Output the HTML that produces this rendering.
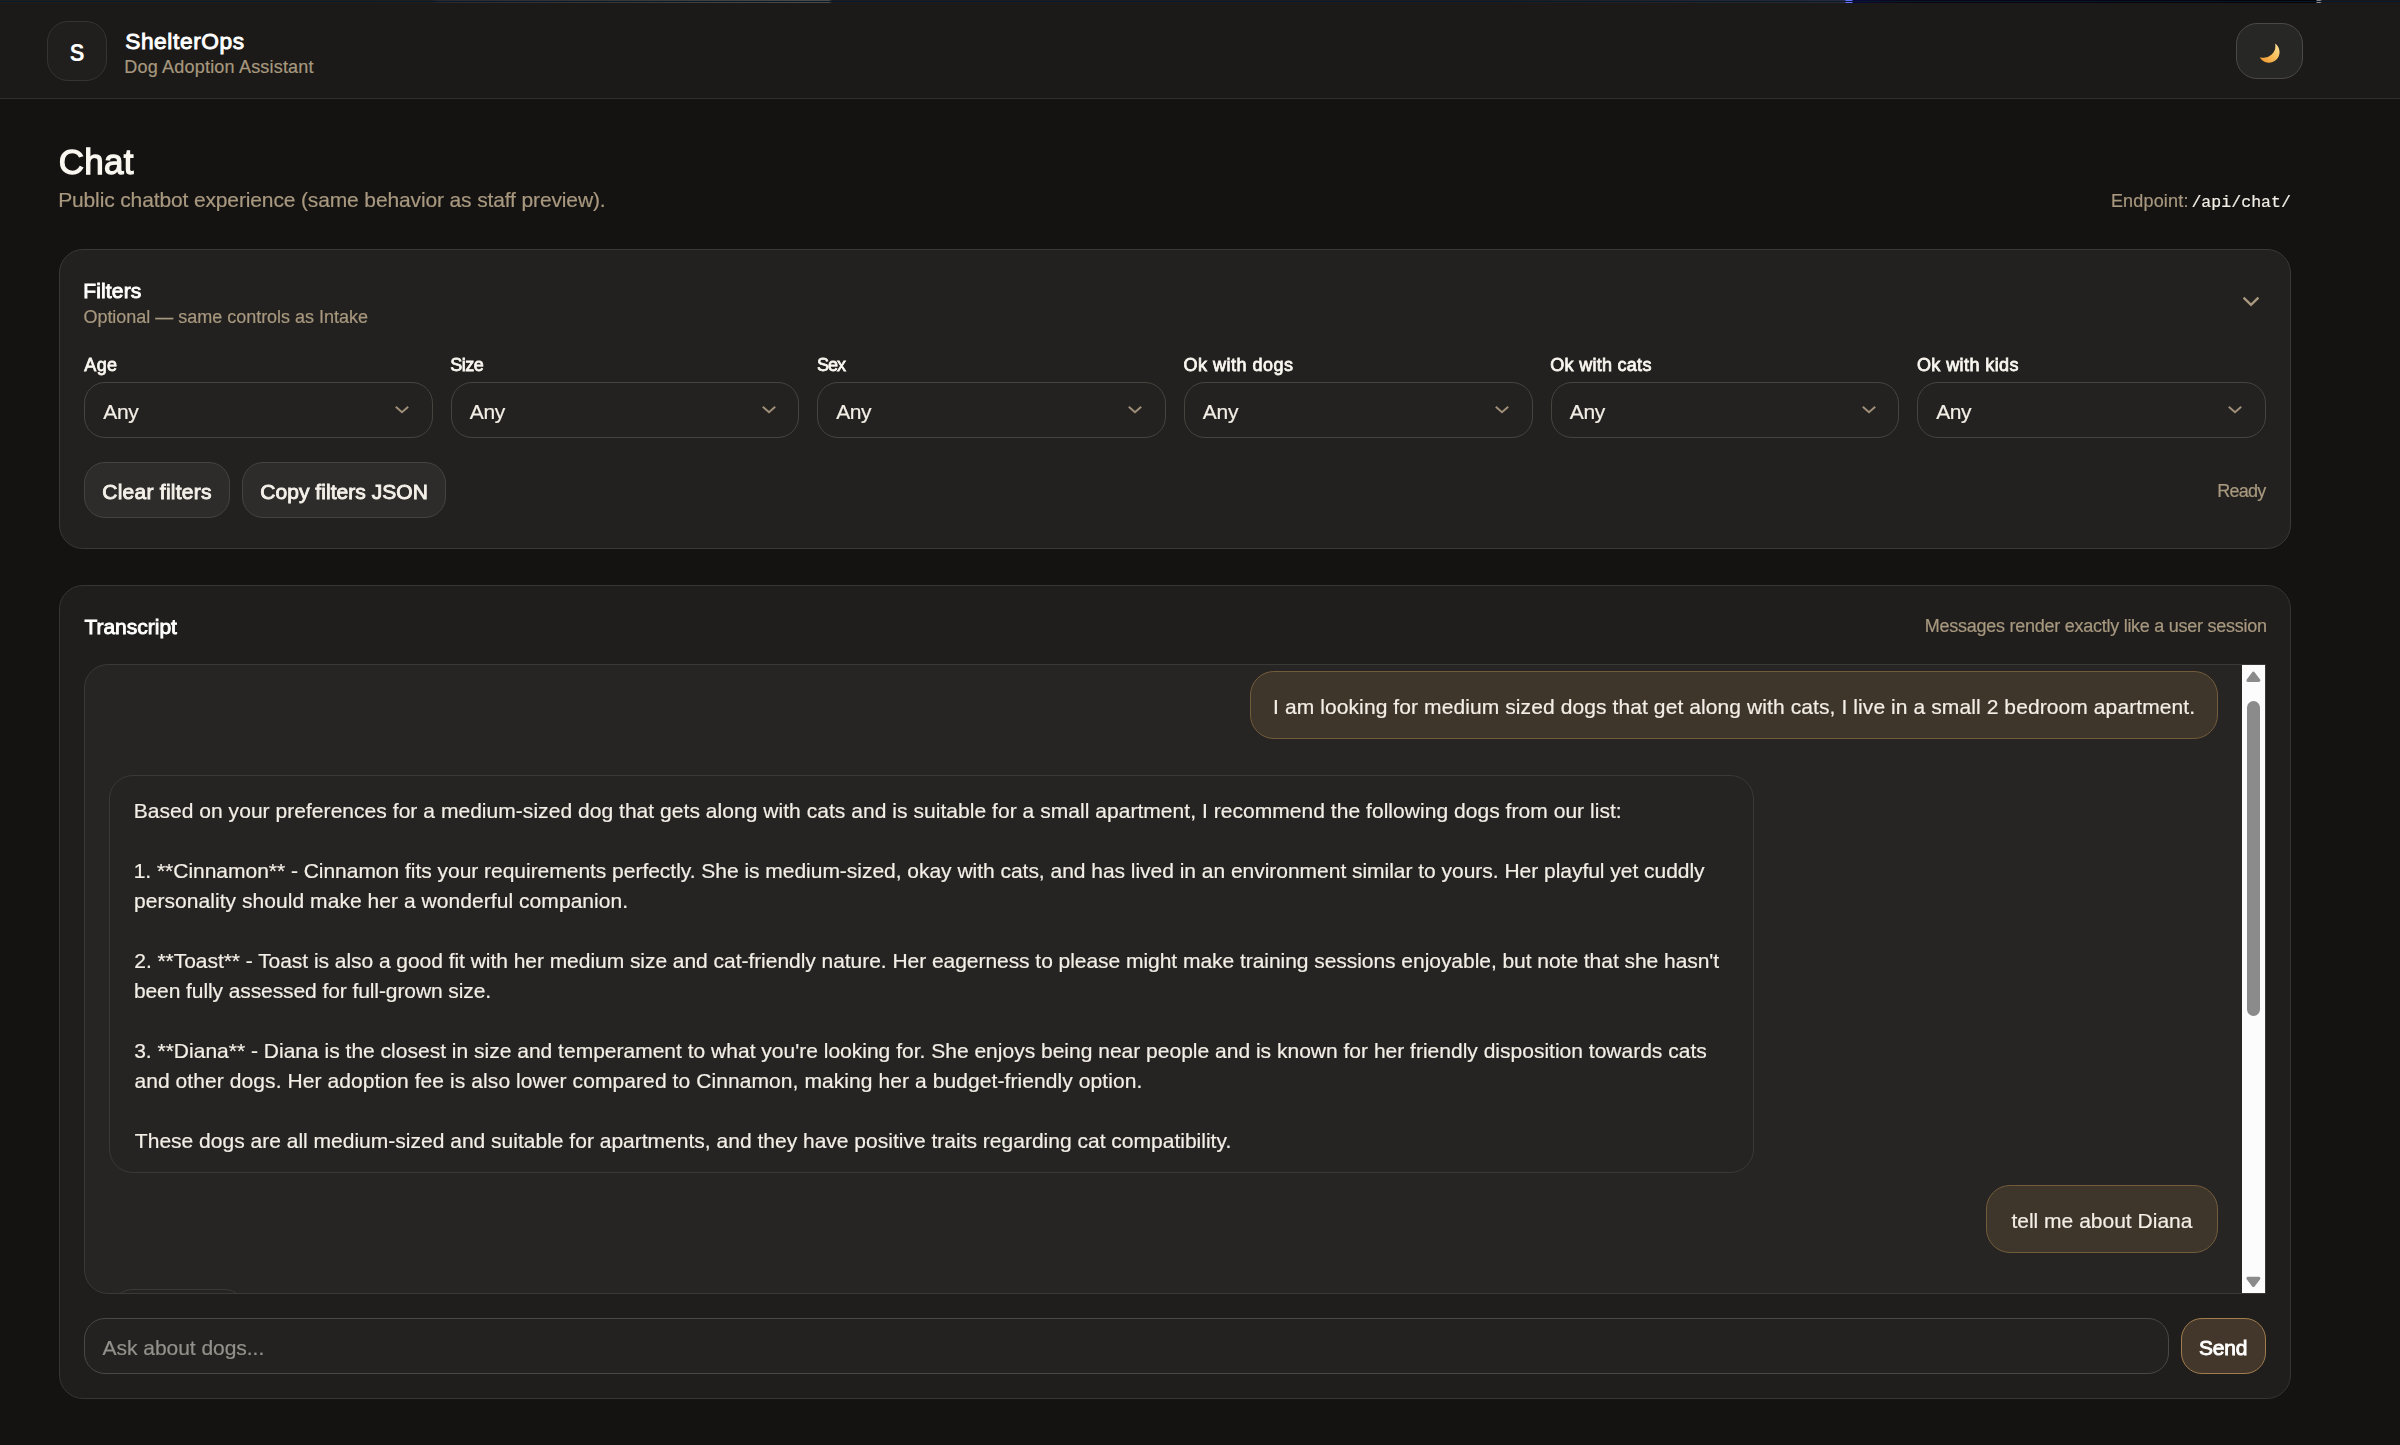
<!DOCTYPE html>
<html lang="en">
<head>
<meta charset="utf-8">
<title>ShelterOps — Chat</title>
<style>
*{box-sizing:border-box;margin:0;padding:0}
html,body{width:2400px;height:1445px;overflow:hidden}
body{-webkit-text-stroke:0.2px currentColor;position:relative;background:#141312;color:#f3eee6;font-family:"Liberation Sans",sans-serif;font-size:21px;line-height:30px}
span{position:relative;white-space:nowrap}
button{font-family:inherit;cursor:pointer}
.strip{position:absolute;left:0;top:0;width:2400px;height:3px;z-index:5;background:linear-gradient(#061a2d,#061a2d) 0 1px/100% 1px no-repeat,linear-gradient(90deg,#1f1c1c 0,#201d1d 430px,#2d2a2c 440px,#3a3737 620px,#4b4846 800px,#4d4a48 829px,#1e1c1c 832px,#1d1c1d 1500px,#2a2a35 1838px,#2e2c55 1845px,#6670ff 1846px,#6670ff 1852px,#0a0440 1853px,#0d0828 1875px,#0c0714 1900px,#080510 2100px,#050304 2310px,#050304 2316px,#8a8888 2317px,#8a8888 2320px,#1a1718 2322px,#1a1718 2400px)}
main{position:absolute;left:0;top:0;width:2400px;height:1445px;will-change:transform}
header{z-index:2;position:absolute;left:0;top:0;width:2400px;height:99px;background:#1b1a18;border-bottom:1px solid #302f2d}
.logo{position:absolute;left:47px;top:21px;width:60px;height:60px;border-radius:21px;border:1px solid #363432;background:#201f1e;color:#fff;font-weight:bold;-webkit-text-stroke:0;font-size:24.5px;line-height:58px;text-align:center}
.logo span{display:inline-block;transform:scaleX(.9)}
.brand{position:absolute;left:125px;top:22px;font-weight:normal;-webkit-text-stroke:0.04em currentColor;font-size:22.7px;line-height:34px;color:#fff;white-space:nowrap}
.tag{position:absolute;left:125px;top:54px;font-size:18px;line-height:26px;color:#a8987f;white-space:nowrap}
.theme{position:absolute;left:2236px;top:23px;width:67px;height:56px;border-radius:21px;border:1px solid #4b4946;background:#272726}
.theme svg{position:absolute;left:18px;top:14px}
h1{position:absolute;left:58px;top:136px;font-size:35px;line-height:50px;font-weight:normal;-webkit-text-stroke:0.036em currentColor;color:#faf6f0;white-space:nowrap}
.sub{position:absolute;left:59px;top:184px;font-size:21px;line-height:30px;color:#a8987f;white-space:nowrap}
.endpoint{position:absolute;left:2112px;top:187px;font-size:18px;line-height:26px;color:#a8987f;white-space:nowrap}
.endpoint code{font-family:"Liberation Mono",monospace;font-size:16.5px;color:#f3eee6}
.card{position:absolute;left:59px;width:2232px;border:1px solid #3a3937;border-radius:24px;background:#22211f}
.filters{top:249px;height:300px}
.transcript{top:585px;height:814px;background:#1f1e1d;border-color:#363533}
.h2{position:absolute;left:24px;font-weight:normal;-webkit-text-stroke:0.042em currentColor;font-size:21px;line-height:30px;color:#fff;white-space:nowrap}
.muted{position:absolute;font-size:18px;line-height:26px;color:#a8987f;white-space:nowrap}
.chev{position:absolute}
.field{position:absolute;top:100px;width:348.67px}
.field label{display:block;font-weight:normal;-webkit-text-stroke:0.042em currentColor;font-size:18px;line-height:26px;color:#faf6f0;white-space:nowrap}
.select{position:absolute;left:0;top:32px;width:100%;height:56px;border:1px solid #47443f;border-radius:21px;background:#232221;padding:12px 18px;font-size:21px;line-height:30px;color:#f3eee6}
.select svg{position:absolute;right:21.5px;top:22.4px}
.btn{position:absolute;height:56px;border:1px solid #454340;border-radius:21px;background:#2d2c2a;color:#f5f1ea;font-weight:normal;-webkit-text-stroke:0.042em currentColor;font-size:21px;line-height:54px;text-align:center;white-space:nowrap}
.chat{position:absolute;left:24px;top:78px;width:2182px;height:630px;border:1px solid #3a3937;border-radius:24px 0 0 24px;background:#262523;overflow:hidden}
.sb{position:absolute;left:2157px;top:0;width:23px;height:628px;background:#fcfcfc}
.sb i{position:absolute;left:5px;top:36px;width:13px;height:315px;border-radius:7px;background:#8b8b8b}
.sb svg{position:absolute;left:0}
.msg{position:absolute;border:1px solid #3b3937;border-radius:24px;background:#252423;padding:18px 24px;font-size:21px;line-height:30px;color:#f3eee6;white-space:nowrap}
.user{background:#3e352b;border-color:#735c3b}
.input{position:absolute;left:24px;top:732px;width:2085px;height:56px;border:1px solid #4a4846;border-radius:21px;background:#232221;padding:12px 18px;font-size:21px;line-height:30px;color:#94918c;white-space:nowrap}
.send{left:2121px;top:732px;width:85px;background:#43372b;border-color:#a07c4e;color:#fff}
#logoS{letter-spacing:0.000px;left:0.40px;top:2.00px}
#brand{letter-spacing:0.610px;left:0.15px;top:2.00px}
#tag{letter-spacing:0.194px;left:-0.69px;top:0.00px}
#h1{letter-spacing:0.309px;left:0.66px;top:1.00px}
#sub{letter-spacing:-0.134px;left:-0.85px;top:1.00px}
#epl{letter-spacing:0.187px;left:-1.12px;top:1.00px}
#epc{letter-spacing:0.062px;left:-3.40px;top:1.00px}
#filt{letter-spacing:0.144px;left:-0.73px;top:-5.00px}
#opt{letter-spacing:-0.018px;left:-0.60px;top:-4.00px}
#lb1{letter-spacing:0.316px;left:0.34px;top:2.00px}
#lb2{letter-spacing:-0.559px;left:-0.33px;top:2.00px}
#lb3{letter-spacing:-0.951px;left:-0.43px;top:2.00px}
#lb4{letter-spacing:0.492px;left:-0.49px;top:2.00px}
#lb5{letter-spacing:0.278px;left:-0.35px;top:2.00px}
#lb6{letter-spacing:0.407px;left:-0.38px;top:2.00px}
#any1{letter-spacing:-0.274px;left:0.18px;top:2.00px}
#any2{letter-spacing:-0.374px;left:0.18px;top:2.00px}
#any3{letter-spacing:-0.471px;left:-0.15px;top:2.00px}
#any4{letter-spacing:-0.263px;left:-0.28px;top:2.00px}
#any5{letter-spacing:-0.321px;left:0.18px;top:2.00px}
#any6{letter-spacing:-0.395px;left:-0.15px;top:2.00px}
#clr{letter-spacing:0.248px;left:0.03px;top:2.00px}
#cpy{letter-spacing:0.048px;left:0.12px;top:2.00px}
#rdy{letter-spacing:-0.769px;left:-0.57px;top:1.00px}
#trn{letter-spacing:-0.009px;left:0.42px;top:0.00px}
#mrx{letter-spacing:-0.256px;left:0.85px;top:1.00px}
#u1{letter-spacing:0.094px;left:-1.93px;top:2.00px}
#a1{letter-spacing:0.043px;left:-0.35px;top:2.00px}
#a3{letter-spacing:-0.026px;left:-0.30px;top:2.00px}
#a4{letter-spacing:0.056px;left:-0.07px;top:2.00px}
#a6{letter-spacing:-0.043px;left:0.28px;top:2.00px}
#a7{letter-spacing:-0.088px;left:-0.07px;top:2.00px}
#a9{letter-spacing:0.005px;left:0.17px;top:2.00px}
#a10{letter-spacing:0.084px;left:0.39px;top:2.00px}
#a12{letter-spacing:0.006px;left:0.86px;top:2.00px}
#u2{letter-spacing:0.004px;left:0.43px;top:2.00px}
#ph{letter-spacing:-0.034px;left:-0.47px;top:2.00px}
#snd{letter-spacing:-0.219px;left:-0.49px;top:2.00px}
</style>
</head>
<body>
<div class="strip"></div>
<header>
  <div class="logo"><span id="logoS">S</span></div>
  <div class="brand"><span id="brand">ShelterOps</span></div>
  <div class="tag"><span id="tag">Dog Adoption Assistant</span></div>
  <button class="theme" aria-label="Toggle theme"><svg width="30" height="30" viewBox="2255 38 30 30"><defs><linearGradient id="mg" x1="0.1" y1="0.95" x2="0.95" y2="0.2"><stop offset="0" stop-color="#f29a34"/><stop offset="0.55" stop-color="#f5bd58"/><stop offset="1" stop-color="#f9dc8c"/></linearGradient></defs><path d="M2275.1 43.6 A10.5 10.5 0 1 1 2259.8 57.15 A11.79 11.79 0 0 0 2275.1 43.6 Z" fill="url(#mg)"/></svg></button>
</header>
<main>
  <h1><span id="h1">Chat</span></h1>
  <p class="sub"><span id="sub">Public chatbot experience (same behavior as staff preview).</span></p>
  <div class="endpoint"><span id="epl">Endpoint:</span> <code><span id="epc">/api/chat/</span></code></div>

  <section class="card filters">
    <div class="h2" style="top:31px"><span id="filt">Filters</span></div>
    <div class="muted" style="left:24px;top:58px"><span id="opt">Optional — same controls as Intake</span></div>
    <svg class="chev" style="left:2181px;top:45px" width="20" height="14" viewBox="0 0 20 14"><path d="M2.6 2.6 L10 9.8 L17.4 2.6" fill="none" stroke="#a8987f" stroke-width="2.4"/></svg>
    <div class="field" style="left:24px"><label><span id="lb1">Age</span></label><div class="select"><span id="any1">Any</span><svg width="16" height="10" viewBox="0 0 16 10"><path d="M1.8 1.7 L8 7.3 L14.2 1.7" fill="none" stroke="#a09079" stroke-width="1.9"/></svg></div></div>
    <div class="field" style="left:390.67px"><label><span id="lb2">Size</span></label><div class="select"><span id="any2">Any</span><svg width="16" height="10" viewBox="0 0 16 10"><path d="M1.8 1.7 L8 7.3 L14.2 1.7" fill="none" stroke="#a09079" stroke-width="1.9"/></svg></div></div>
    <div class="field" style="left:757.33px"><label><span id="lb3">Sex</span></label><div class="select"><span id="any3">Any</span><svg width="16" height="10" viewBox="0 0 16 10"><path d="M1.8 1.7 L8 7.3 L14.2 1.7" fill="none" stroke="#a09079" stroke-width="1.9"/></svg></div></div>
    <div class="field" style="left:1124px"><label><span id="lb4">Ok with dogs</span></label><div class="select"><span id="any4">Any</span><svg width="16" height="10" viewBox="0 0 16 10"><path d="M1.8 1.7 L8 7.3 L14.2 1.7" fill="none" stroke="#a09079" stroke-width="1.9"/></svg></div></div>
    <div class="field" style="left:1490.67px"><label><span id="lb5">Ok with cats</span></label><div class="select"><span id="any5">Any</span><svg width="16" height="10" viewBox="0 0 16 10"><path d="M1.8 1.7 L8 7.3 L14.2 1.7" fill="none" stroke="#a09079" stroke-width="1.9"/></svg></div></div>
    <div class="field" style="left:1857.33px"><label><span id="lb6">Ok with kids</span></label><div class="select"><span id="any6">Any</span><svg width="16" height="10" viewBox="0 0 16 10"><path d="M1.8 1.7 L8 7.3 L14.2 1.7" fill="none" stroke="#a09079" stroke-width="1.9"/></svg></div></div>
    <button class="btn" style="left:24px;top:212px;width:146px"><span id="clr">Clear filters</span></button>
    <button class="btn" style="left:182px;top:212px;width:204px"><span id="cpy">Copy filters JSON</span></button>
    <div class="muted" style="right:24px;top:227px"><span id="rdy">Ready</span></div>
  </section>

  <section class="card transcript">
    <div class="h2" style="top:26px"><span id="trn">Transcript</span></div>
    <div class="muted" style="right:24px;top:26px"><span id="mrx">Messages render exactly like a user session</span></div>
    <div class="chat">
      <div class="msg user" style="left:1165px;top:6px;width:968px"><span id="u1">I am looking for medium sized dogs that get along with cats, I live in a small 2 bedroom apartment.</span></div>
      <div class="msg" style="left:24px;top:110px;width:1645px;height:398px"><span id="a1">Based on your preferences for a medium-sized dog that gets along with cats and is suitable for a small apartment, I recommend the following dogs from our list:</span><br><br><span id="a3">1. **Cinnamon** - Cinnamon fits your requirements perfectly. She is medium-sized, okay with cats, and has lived in an environment similar to yours. Her playful yet cuddly</span><br><span id="a4">personality should make her a wonderful companion.</span><br><br><span id="a6">2. **Toast** - Toast is also a good fit with her medium size and cat-friendly nature. Her eagerness to please might make training sessions enjoyable, but note that she hasn't</span><br><span id="a7">been fully assessed for full-grown size.</span><br><br><span id="a9">3. **Diana** - Diana is the closest in size and temperament to what you're looking for. She enjoys being near people and is known for her friendly disposition towards cats</span><br><span id="a10">and other dogs. Her adoption fee is also lower compared to Cinnamon, making her a budget-friendly option.</span><br><br><span id="a12">These dogs are all medium-sized and suitable for apartments, and they have positive traits regarding cat compatibility.</span></div>
      <div class="msg user" style="left:1901px;top:520px;width:232px"><span id="u2">tell me about Diana</span></div>
      <div class="msg" style="left:24px;top:624px;width:139px;height:68px">Thinking…</div>
      <div class="sb"><svg style="top:0" width="23" height="23" viewBox="0 0 23 23"><path d="M11.4 8.2 L16.9 15.4 L5.9 15.4 Z" fill="#8b8b8b" stroke="#8b8b8b" stroke-width="3" stroke-linejoin="round"/></svg><i></i><svg style="top:605px" width="23" height="23" viewBox="0 0 23 23"><path d="M5.9 8.3 L16.9 8.3 L11.4 15.5 Z" fill="#8b8b8b" stroke="#8b8b8b" stroke-width="3" stroke-linejoin="round"/></svg></div>
    </div>
    <div class="input"><span id="ph">Ask about dogs...</span></div>
    <button class="btn send"><span id="snd">Send</span></button>
  </section>
</main>
</body>
</html>
